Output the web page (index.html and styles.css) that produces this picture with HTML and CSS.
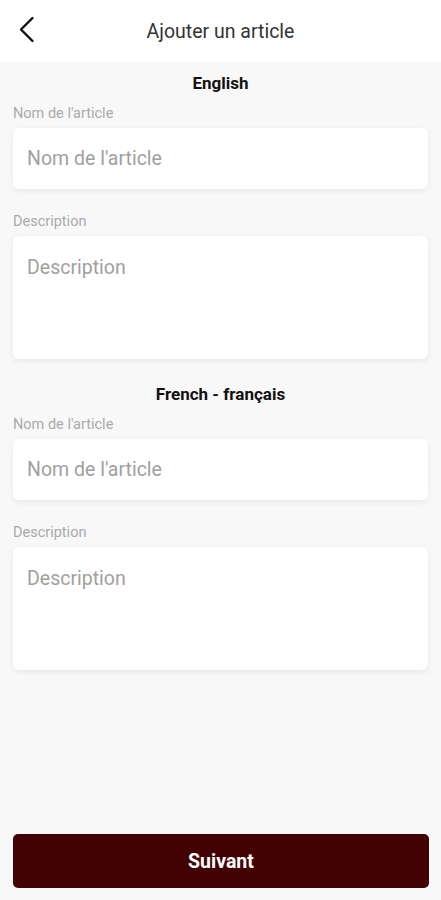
FILE: index.html
```html
<!DOCTYPE html>
<html lang="fr">
<head>
    <meta charset="UTF-8">
    <meta name="viewport" content="width=device-width, initial-scale=1.0">
    <title>Ajouter un article</title>
    <link rel="stylesheet" href="styles.css">
</head>
<body>
    <div class="app">
        <header class="topbar">
            <button class="back" aria-label="Retour">
                <svg width="17" height="27" viewBox="0 0 17 27">
                    <path d="M14.5 2 L3 13.5 L14.5 25" fill="none" stroke="#111" stroke-width="2.4" stroke-linecap="round" stroke-linejoin="round"/>
                </svg>
            </button>
            <h1 class="title">Ajouter un article</h1>
        </header>

        <main class="form">
            <section class="lang">
                <h2 class="lang-title">English</h2>
                <label class="label">Nom de l'article</label>
                <div class="card">
                    <input type="text" class="field" placeholder="Nom de l'article">
                </div>
                <label class="label">Description</label>
                <div class="card card-tall">
                    <textarea class="field area" placeholder="Description"></textarea>
                </div>
            </section>

            <section class="lang">
                <h2 class="lang-title">French - français</h2>
                <label class="label">Nom de l'article</label>
                <div class="card">
                    <input type="text" class="field" placeholder="Nom de l'article">
                </div>
                <label class="label">Description</label>
                <div class="card card-tall">
                    <textarea class="field area" placeholder="Description"></textarea>
                </div>
            </section>
        </main>

        <div class="footer">
            <button class="next">Suivant</button>
        </div>
    </div>
</body>
</html>
```

FILE: styles.css
```css
* {
    box-sizing: border-box;
}

body {
    margin: 0;
    font-family: Roboto, "Noto Sans", Arial, sans-serif;
    background-color: #f8f8f8;
    color: #222;
}

.app {
    display: flex;
    flex-direction: column;
    height: 100vh;
}

.topbar {
    position: relative;
    display: flex;
    align-items: center;
    justify-content: center;
    height: 62px;
    background-color: #fff;
}

.back {
    position: absolute;
    left: 18px;
    top: 16px;
    padding: 0;
    border: none;
    background: none;
    cursor: pointer;
}

.title {
    margin: 0;
    font-size: 19.5px;
    font-weight: 400;
    color: #333;
    padding-top: 1px;
}

.form {
    padding: 11px 13px 0;
}

.lang + .lang {
    margin-top: 25px;
}

.lang-title {
    margin: 0;
    text-align: center;
    font-size: 17px;
    line-height: 20px;
    font-weight: 700;
    color: #111;
}

.label {
    display: block;
    margin-top: 13px;
    font-size: 14.5px;
    line-height: 16px;
    color: #aaa;
}

.card + .label {
    margin-top: 25px;
}

.card {
    margin-top: 6px;
    height: 61px;
    background-color: #fff;
    border-radius: 6px;
    box-shadow: 0 2px 6px rgba(0, 0, 0, 0.07);
    display: flex;
}

.card-tall {
    height: 123px;
}

.field {
    width: 100%;
    border: none;
    outline: none;
    background: transparent;
    padding: 0 14px;
    font-family: inherit;
    font-size: 19.5px;
    color: #333;
}

.field::placeholder {
    color: #a0a0a0;
}

.area {
    resize: none;
    padding-top: 20px;
    line-height: 24px;
}

.footer {
    margin-top: auto;
    padding: 0 12px 12px 13px;
}

.next {
    width: 100%;
    height: 54px;
    border: none;
    border-radius: 5px;
    background-color: #420102;
    color: #fff;
    font-family: inherit;
    font-size: 19.5px;
    font-weight: 700;
    cursor: pointer;
}
```
